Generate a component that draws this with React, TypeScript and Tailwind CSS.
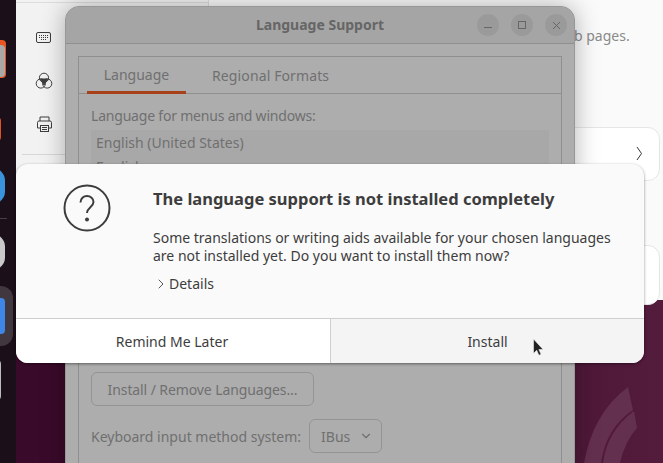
import React from "react";
import { ChevronDown, ChevronRight } from "lucide-react";

const font = { fontFamily: '"Noto Sans", sans-serif' };

const Dock = () => (
  <div className="absolute left-0 top-0 w-4 h-full bg-[#1b0f19] overflow-hidden">
    <div className="absolute -left-3 top-[40px] w-[18px] h-[38px] rounded bg-[#e95420]" />
    <div className="absolute -left-3 top-[45px] w-[17px] h-[32px] rounded bg-[#a9a9a9]" />
    <div className="absolute -left-3 top-[117px] w-[13px] h-[24px] rounded-sm bg-[#e2531d]" />
    <div className="absolute -left-5 top-[168px] w-[25px] h-[36px] rounded-full bg-[#3a94dd]" />
    <div className="absolute top-[218px] left-0 w-[7px] h-px bg-[#4a3f48]" />
    <div className="absolute -left-5 top-[234px] w-[25px] h-[36px] rounded-full border-[5px] border-[#c9c9c9] bg-[#333]" />
    <div className="absolute -left-3 top-[286px] w-[25px] h-[60px] rounded-xl bg-[#41373f]" />
    <div className="absolute -left-2 top-[298px] w-[13px] h-[36px] rounded bg-[#3f87e6]" />
    <div className="absolute -left-2 top-[360px] w-[9px] h-[40px] rounded-sm bg-[#bdbdbd]" />
  </div>
);

const KeyboardIcon = () => (
  <svg width="16" height="12" viewBox="0 0 16 12" fill="none" stroke="#3d3d3d">
    <rect x="0.5" y="0.5" width="14" height="10" rx="1.5" />
    <path d="M3 3.5h9M3 5.5h9M5 7.5h5" strokeDasharray="1 1" />
  </svg>
);

const ColorIcon = () => (
  <svg width="18" height="18" viewBox="0 0 18 18" fill="none" stroke="#3d3d3d">
    <circle cx="9" cy="5.8" r="4.6" />
    <circle cx="5.8" cy="11.5" r="4.6" />
    <circle cx="12.2" cy="11.5" r="4.6" />
    <path d="M5.5 7h7L9 13z" fill="#3d3d3d" />
  </svg>
);

const PrinterIcon = () => (
  <svg width="17" height="17" viewBox="0 0 17 17" fill="none" stroke="#3d3d3d">
    <path d="M4 5V1h9v4M4 12H1.5V6.5a1.5 1.5 0 0 1 1.5-1.5h11a1.5 1.5 0 0 1 1.5 1.5V12H13" />
    <rect x="4.5" y="9.5" width="8" height="6" />
    <path d="M6 11.5h5M6 13.5h5" />
  </svg>
);

const SettingsWindow = () => (
  <div className="absolute left-4 top-0 right-0 h-[300px] bg-[#fafafa]">
    <div className="absolute left-0 top-0 w-[193px] h-[300px] bg-[#f2f2f2] border-r border-[#dcdcdc]">
      <div className="h-[3px] border-b border-[#dcdcdc]" />
      <div className="flex flex-col items-center w-[56px] pt-[29px]">
        <KeyboardIcon />
        <div className="mt-[28px]">
          <ColorIcon />
        </div>
        <div className="mt-[26px]">
          <PrinterIcon />
        </div>
      </div>
      <div className="absolute left-[6px] right-0 top-[154px] h-px bg-[#d8d8d8]" />
    </div>
    <div className="absolute left-[558px] top-[26px] text-[14px] leading-5 text-[#8a8a8a] whitespace-nowrap">
      b pages.
    </div>
    <div className="absolute left-[540px] top-[127px] w-[104px] h-[54px] rounded-xl bg-white border border-[#e6e6e6]">
      <svg className="absolute left-[79px] top-[18px]" width="7" height="15" viewBox="0 0 7 15" fill="none" stroke="#333">
        <path d="M1 1l4.5 6.5L1 14" />
      </svg>
    </div>
    <div className="absolute left-[540px] top-[245px] w-[104px] h-[60px] rounded-xl bg-white border border-[#e6e6e6]" />
  </div>
);

const LanguageWindow = () => (
  <div className="absolute left-[65px] top-[6px] w-[510px] h-[470px] rounded-t-[14px] bg-[#adadad] border border-[#979797] shadow-[0_0_24px_rgba(0,0,0,0.3)] overflow-hidden">
    <div className="relative h-[37px] bg-[#a5a5a5] border-b border-[#8f8f8f] flex items-center justify-center">
      <span className="text-[14px] font-bold text-[#666] -mt-[2px]">Language Support</span>
      <div className="absolute right-[7px] top-[7px] flex gap-[12px]">
        <div className="w-[22px] h-[22px] rounded-full bg-[#9a9a9a] flex items-center justify-center">
          <div className="w-[8px] h-px bg-[#666] mt-[5px]" />
        </div>
        <div className="w-[22px] h-[22px] rounded-full bg-[#9a9a9a] flex items-center justify-center">
          <div className="w-[8px] h-[8px] border border-[#666]" />
        </div>
        <div className="w-[22px] h-[22px] rounded-full bg-[#9a9a9a] flex items-center justify-center">
          <svg width="9" height="9" viewBox="0 0 9 9" stroke="#666">
            <path d="M1 1l7 7M8 1l-7 7" />
          </svg>
        </div>
      </div>
    </div>
    <div className="mx-[12px] mt-[12px] h-[420px] border border-[#8f8f8f]">
      <div className="h-[37px] border-b border-[#8f8f8f] flex pl-[8px] text-[14px] text-[#707070]">
        <div className="w-[99px] h-[37px] border-b-[3px] border-[#a8401a] flex items-center justify-center">
          Language
        </div>
        <div className="ml-[26px] h-[36px] flex items-center tracking-[0.12px]">Regional Formats</div>
      </div>
      <div className="px-[12px] pt-[12px] text-[14px] text-[#707070]">
        <div className="leading-[20px] tracking-[-0.2px]">Language for menus and windows:</div>
        <div className="mt-[4px] w-[458px] h-[60px] bg-[#a8a8a8] px-[5px] pt-px leading-[24px]">
          <div>English (United States)</div>
          <div>English</div>
        </div>
        <div className="mt-[182px] w-[223px] h-[34px] rounded-md border border-[#949494] flex items-center justify-center tracking-[-0.1px]">
          Install / Remove Languages...
        </div>
        <div className="mt-[13px] flex items-center gap-[8px]">
          <span>Keyboard input method system:</span>
          <div className="w-[73px] h-[34px] rounded-md border border-[#949494] flex items-center pl-[11px] gap-[9px]">
            <span>IBus</span>
            <ChevronDown size={14} className="text-[#707070]" />
          </div>
        </div>
      </div>
    </div>
  </div>
);

const Cursor = () => (
  <svg className="absolute left-[532px] top-[338px]" width="14" height="20" viewBox="0 0 14 20">
    <path d="M1.5 1v14.5l3.2-3.2 2.2 5 2.2-1-2.2-4.8h4.2z" fill="#222" stroke="#eee" strokeWidth="0.6" />
  </svg>
);

const Dialog = () => (
  <div className="absolute left-4 top-[164px] w-[628px] h-[199px] rounded-xl bg-[#fafafa] shadow-[0_1px_3px_rgba(0,0,0,0.45)] overflow-hidden flex flex-col">
    <div className="flex-1 flex pl-[47px] pt-[20px]">
      <svg width="48" height="48" viewBox="0 0 48 48" fill="none" stroke="#3d3d3d" className="shrink-0">
        <circle cx="24" cy="24" r="22.5" strokeWidth="2" />
        <path d="M17.5 18.5c0-4 3-6.5 6.5-6.5s6.5 2.5 6.5 6c0 5-6.5 5.5-6.5 11" strokeWidth="2" />
        <circle cx="24" cy="35.5" r="2" fill="#3d3d3d" stroke="none" />
      </svg>
      <div className="ml-[42px] text-[#3d3d3d]">
        <div className="text-[16.5px] font-bold leading-[22px] mt-[4px] whitespace-nowrap">
          The language support is not installed completely
        </div>
        <div className="mt-[19px] text-[14px] leading-[18px] whitespace-nowrap">
          Some translations or writing aids available for your chosen languages
          <br />
          are not installed yet. Do you want to install them now?
        </div>
        <div className="mt-[9px] flex items-center text-[14px] leading-5">
          <ChevronRight size={16} strokeWidth={1.3} className="mr-0" />
          <span>Details</span>
        </div>
      </div>
    </div>
    <div className="h-[45px] flex border-t border-[#cfcfcf] text-[14px] text-[#3d3d3d]">
      <div className="w-[315px] pr-[2px] bg-white border-r border-[#cfcfcf] flex items-center justify-center">
        Remind Me Later
      </div>
      <div className="flex-1 bg-[#f4f4f4] flex items-center justify-center">Install</div>
    </div>
  </div>
);

export default function App() {
  return (
    <div
      className="relative w-[663px] h-[463px] overflow-hidden bg-[linear-gradient(90deg,#3a0a2a_0%,#3a0a2a_20%,#531b3c_100%)]"
      style={font}
    >
      <svg className="absolute left-[573px] top-[383px]" width="90" height="80" viewBox="0 0 90 80" fill="#64304f">
        <path d="M11 80Q20 30 55 4L60 27Q33 45 28 80z" />
        <path d="M30 80Q34 48 61 28L64 45Q52 58 47 80z" />
      </svg>
      <Dock />
      <SettingsWindow />
      <LanguageWindow />
      <Dialog />
      <Cursor />
    </div>
  );
}
